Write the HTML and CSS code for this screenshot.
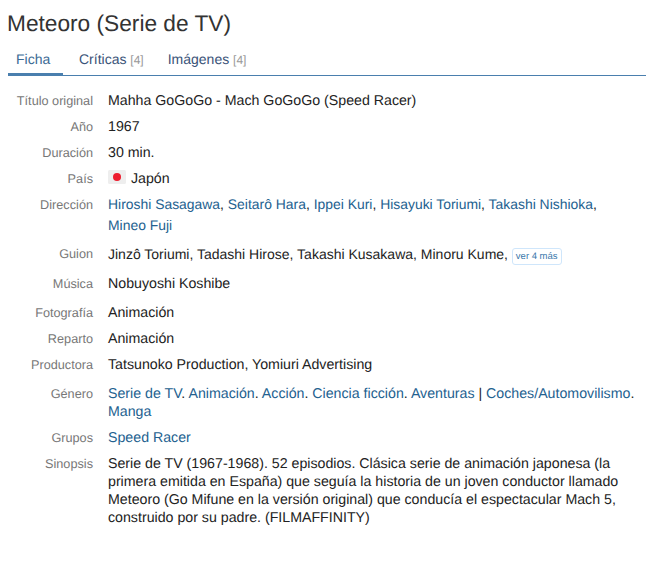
FILE: index.html
```html
<!DOCTYPE html>
<html lang="es">
<head>
<meta charset="utf-8">
<title>Meteoro (Serie de TV)</title>
<link rel="stylesheet" href="styles.css">
</head>
<body>
<h1 class="title">Meteoro (Serie de TV)</h1>
<nav class="tabs">
  <a class="tab tab-active">Ficha</a>
  <a class="tab">Críticas <span class="count">[4]</span></a>
  <a class="tab">Imágenes <span class="count">[4]</span></a>
</nav>
<dl class="sheet">
  <div class="row"><dt>Título original</dt><dd>Mahha GoGoGo - Mach GoGoGo (Speed Racer)</dd></div>
  <div class="row"><dt>Año</dt><dd>1967</dd></div>
  <div class="row"><dt>Duración</dt><dd>30 min.</dd></div>
  <div class="row"><dt>País</dt><dd><svg class="flag" width="18" height="14" viewBox="0 0 18 14"><rect width="18" height="14" rx="1.5" fill="#eeeeee"/><circle cx="9" cy="7" r="4" fill="#ed1c2e"/></svg>Japón</dd></div>
  <div class="row"><dt>Dirección</dt><dd class="loose"><a>Hiroshi Sasagawa</a>, <a>Seitarô Hara</a>, <a>Ippei Kuri</a>, <a>Hisayuki Toriumi</a>, <a>Takashi Nishioka</a>, <a>Mineo Fuji</a></dd></div>
  <div class="row row-mid"><dt>Guion</dt><dd class="tight">Jinzô Toriumi, Tadashi Hirose, Takashi Kusakawa, Minoru Kume, <span class="more">ver 4 más</span></dd></div>
  <div class="row row-tall"><dt>Música</dt><dd>Nobuyoshi Koshibe</dd></div>
  <div class="row"><dt>Fotografía</dt><dd>Animación</dd></div>
  <div class="row"><dt>Reparto</dt><dd>Animación</dd></div>
  <div class="row row-tall"><dt>Productora</dt><dd>Tatsunoko Production, Yomiuri Advertising</dd></div>
  <div class="row"><dt>Género</dt><dd><a>Serie de TV</a>. <a>Animación</a>. <a>Acción</a>. <a>Ciencia ficción</a>. <a>Aventuras</a> | <a>Coches/Automovilismo</a>. <a>Manga</a></dd></div>
  <div class="row"><dt>Grupos</dt><dd><a>Speed Racer</a></dd></div>
  <div class="row"><dt>Sinopsis</dt><dd>Serie de TV (1967-1968). 52 episodios. Clásica serie de animación japonesa (la primera emitida en España) que seguía la historia de un joven conductor llamado Meteoro (Go Mifune en la versión original) que conducía el espectacular Mach 5, construido por su padre. (FILMAFFINITY)</dd></div>
</dl>
</body>
</html>
```
FILE: styles.css
```css
* { box-sizing: border-box; }
html, body { margin: 0; }
body {
  background: #fff;
  color: #333;
  font-family: "Liberation Sans", Arial, sans-serif;
  font-size: 14px;
  line-height: 18px;
  padding: 0 0 0 8px;
  height: 567px;
  overflow: hidden;
  text-rendering: geometricPrecision;
}
.title {
  margin: 9px 0 0 -1px;
  font-size: 22.7px;
  font-weight: 400;
  line-height: 28px;
  color: #333;
}
.tabs {
  display: flex;
  margin-top: 10px;
  height: 29px;
  border-bottom: 1px solid #4a7fae;
}
.tab {
  padding: 3px 8px 0;
  margin-right: 8px;
  color: #3a5378;
  height: 29px;
}
.tab-active {
  width: 55px;
  border-bottom: 3px solid #4a7fae;
  color: #3b6a94;
}
.count { font-size: 12px; color: #999; }
.sheet { margin: 12px 0 0; }
.row {
  display: grid;
  grid-template-columns: 85px 532px;
  column-gap: 15px;
  padding: 4px 0;
}
.row-mid { padding-bottom: 6px; }
.row-tall { padding-bottom: 7px; }
dt { text-align: right; color: #777; font-size: 12.7px; }
dd { margin: 0; color: #222; font-size: 14.2px; }
dd a { color: #23618f; }
dd.loose { line-height: 21px; margin: -2px 0 1px; font-size: 13.92px; padding-right: 20px; }
dd.tight { font-size: 14px; }
.flag { vertical-align: -1px; margin-right: 5px; }
.more {
  display: inline-block;
  font-size: 9.5px;
  line-height: 13px;
  padding: 1px 3px;
  color: #3b78ab;
  border: 1px solid #cfe6fb;
  border-radius: 3px;
  vertical-align: 0;
}
```
